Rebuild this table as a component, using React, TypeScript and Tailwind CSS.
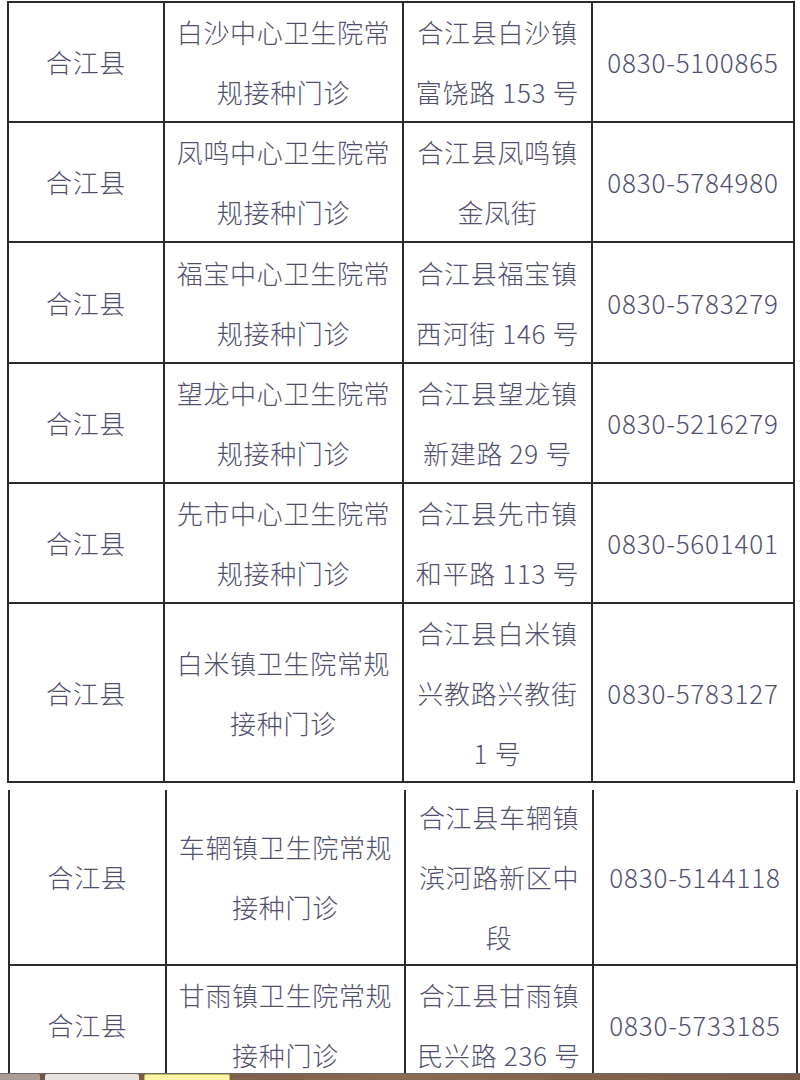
import React from "react";

type Row = { county: string; name: string[]; addr: string[]; phone: string; h: number };

const top: Row[] = [
  { county: "合江县", name: ["白沙中心卫生院常", "规接种门诊"], addr: ["合江县白沙镇", "富饶路 153 号"], phone: "0830-5100865", h: 118 },
  { county: "合江县", name: ["凤鸣中心卫生院常", "规接种门诊"], addr: ["合江县凤鸣镇", "金凤街"], phone: "0830-5784980", h: 118 },
  { county: "合江县", name: ["福宝中心卫生院常", "规接种门诊"], addr: ["合江县福宝镇", "西河街 146 号"], phone: "0830-5783279", h: 119 },
  { county: "合江县", name: ["望龙中心卫生院常", "规接种门诊"], addr: ["合江县望龙镇", "新建路 29 号"], phone: "0830-5216279", h: 118 },
  { county: "合江县", name: ["先市中心卫生院常", "规接种门诊"], addr: ["合江县先市镇", "和平路 113 号"], phone: "0830-5601401", h: 118 },
  { county: "合江县", name: ["白米镇卫生院常规", "接种门诊"], addr: ["合江县白米镇", "兴教路兴教街", "1 号"], phone: "0830-5783127", h: 177 },
];

const bottom: Row[] = [
  { county: "合江县", name: ["车辋镇卫生院常规", "接种门诊"], addr: ["合江县车辋镇", "滨河路新区中", "段"], phone: "0830-5144118", h: 174 },
  { county: "合江县", name: ["甘雨镇卫生院常规", "接种门诊"], addr: ["合江县甘雨镇", "民兴路 236 号"], phone: "0830-5733185", h: 118 },
];

const cell =
  "border-2 border-[#2b2b2b] text-center align-middle p-0 text-[26px] leading-[60px] text-[#4f4f6f] font-light";

function Inner({ h, children, phone }: { h: number; children: React.ReactNode; phone?: boolean }) {
  return (
    <div
      className={
        "flex flex-col justify-center items-center " +
        (phone ? "tracking-[0.8px]" : "tracking-[0.7px]")
      }
      style={{ height: h }}
    >
      {children}
    </div>
  );
}

function Lines({ lines }: { lines: string[] }) {
  return (
    <>
      {lines.map((l, i) => (
        <div key={i} className="whitespace-nowrap">
          {l}
        </div>
      ))}
    </>
  );
}

function Table({ rows, noTop, widths }: { rows: Row[]; noTop?: boolean; widths: string[] }) {
  return (
    <table className="border-collapse table-fixed w-max">
      <colgroup>
        {widths.map((w, i) => (
          <col key={i} className={w} />
        ))}
      </colgroup>
      <tbody>
        {rows.map((r, i) => {
          const t = noTop && i === 0 ? " border-t-0" : "";
          return (
            <tr key={i}>
              <td className={cell + t}>
                <Inner h={r.h}>{r.county}</Inner>
              </td>
              <td className={cell + t}>
                <Inner h={r.h}>
                  <Lines lines={r.name} />
                </Inner>
              </td>
              <td className={cell + t}>
                <Inner h={r.h}>
                  <Lines lines={r.addr} />
                </Inner>
              </td>
              <td className={cell + t}>
                <Inner h={r.h} phone>
                  {r.phone}
                </Inner>
              </td>
            </tr>
          );
        })}
      </tbody>
    </table>
  );
}

export default function App() {
  return (
    <div
      className="h-[1080px] w-[800px] flex flex-col overflow-hidden bg-white"
      style={{ fontFamily: '"Noto Sans CJK SC", "Noto Sans", sans-serif' }}
    >
      <div className="flex-1 overflow-hidden">
        <div className="pl-[7px] pt-[1px]">
          <Table rows={top} widths={["w-[156px]", "w-[239px]", "w-[189px]", "w-[202px]"]} />
        </div>
        <div className="pl-[8px] pt-[7px]">
          <Table rows={bottom} noTop widths={["w-[157px]", "w-[239px]", "w-[188px]", "w-[204px]"]} />
        </div>
      </div>
      <div className="h-[1px] bg-[#6a6a6a]" />
      <div className="h-[6px] flex items-end gap-[5px] bg-gradient-to-r from-[#6f5240] via-[#8b6a52] to-[#7a5a45]">
        <div className="h-[6px] w-[40px] bg-[#a99d95] rounded-tr-[2px]" />
        <div className="h-[6px] w-[94px] bg-[#e7e3df] rounded-t-[2px]" />
        <div className="h-[6px] w-[86px] bg-[#fff6a6] border border-b-0 border-[#c9b958] rounded-t-[2px]" />
      </div>
    </div>
  );
}
